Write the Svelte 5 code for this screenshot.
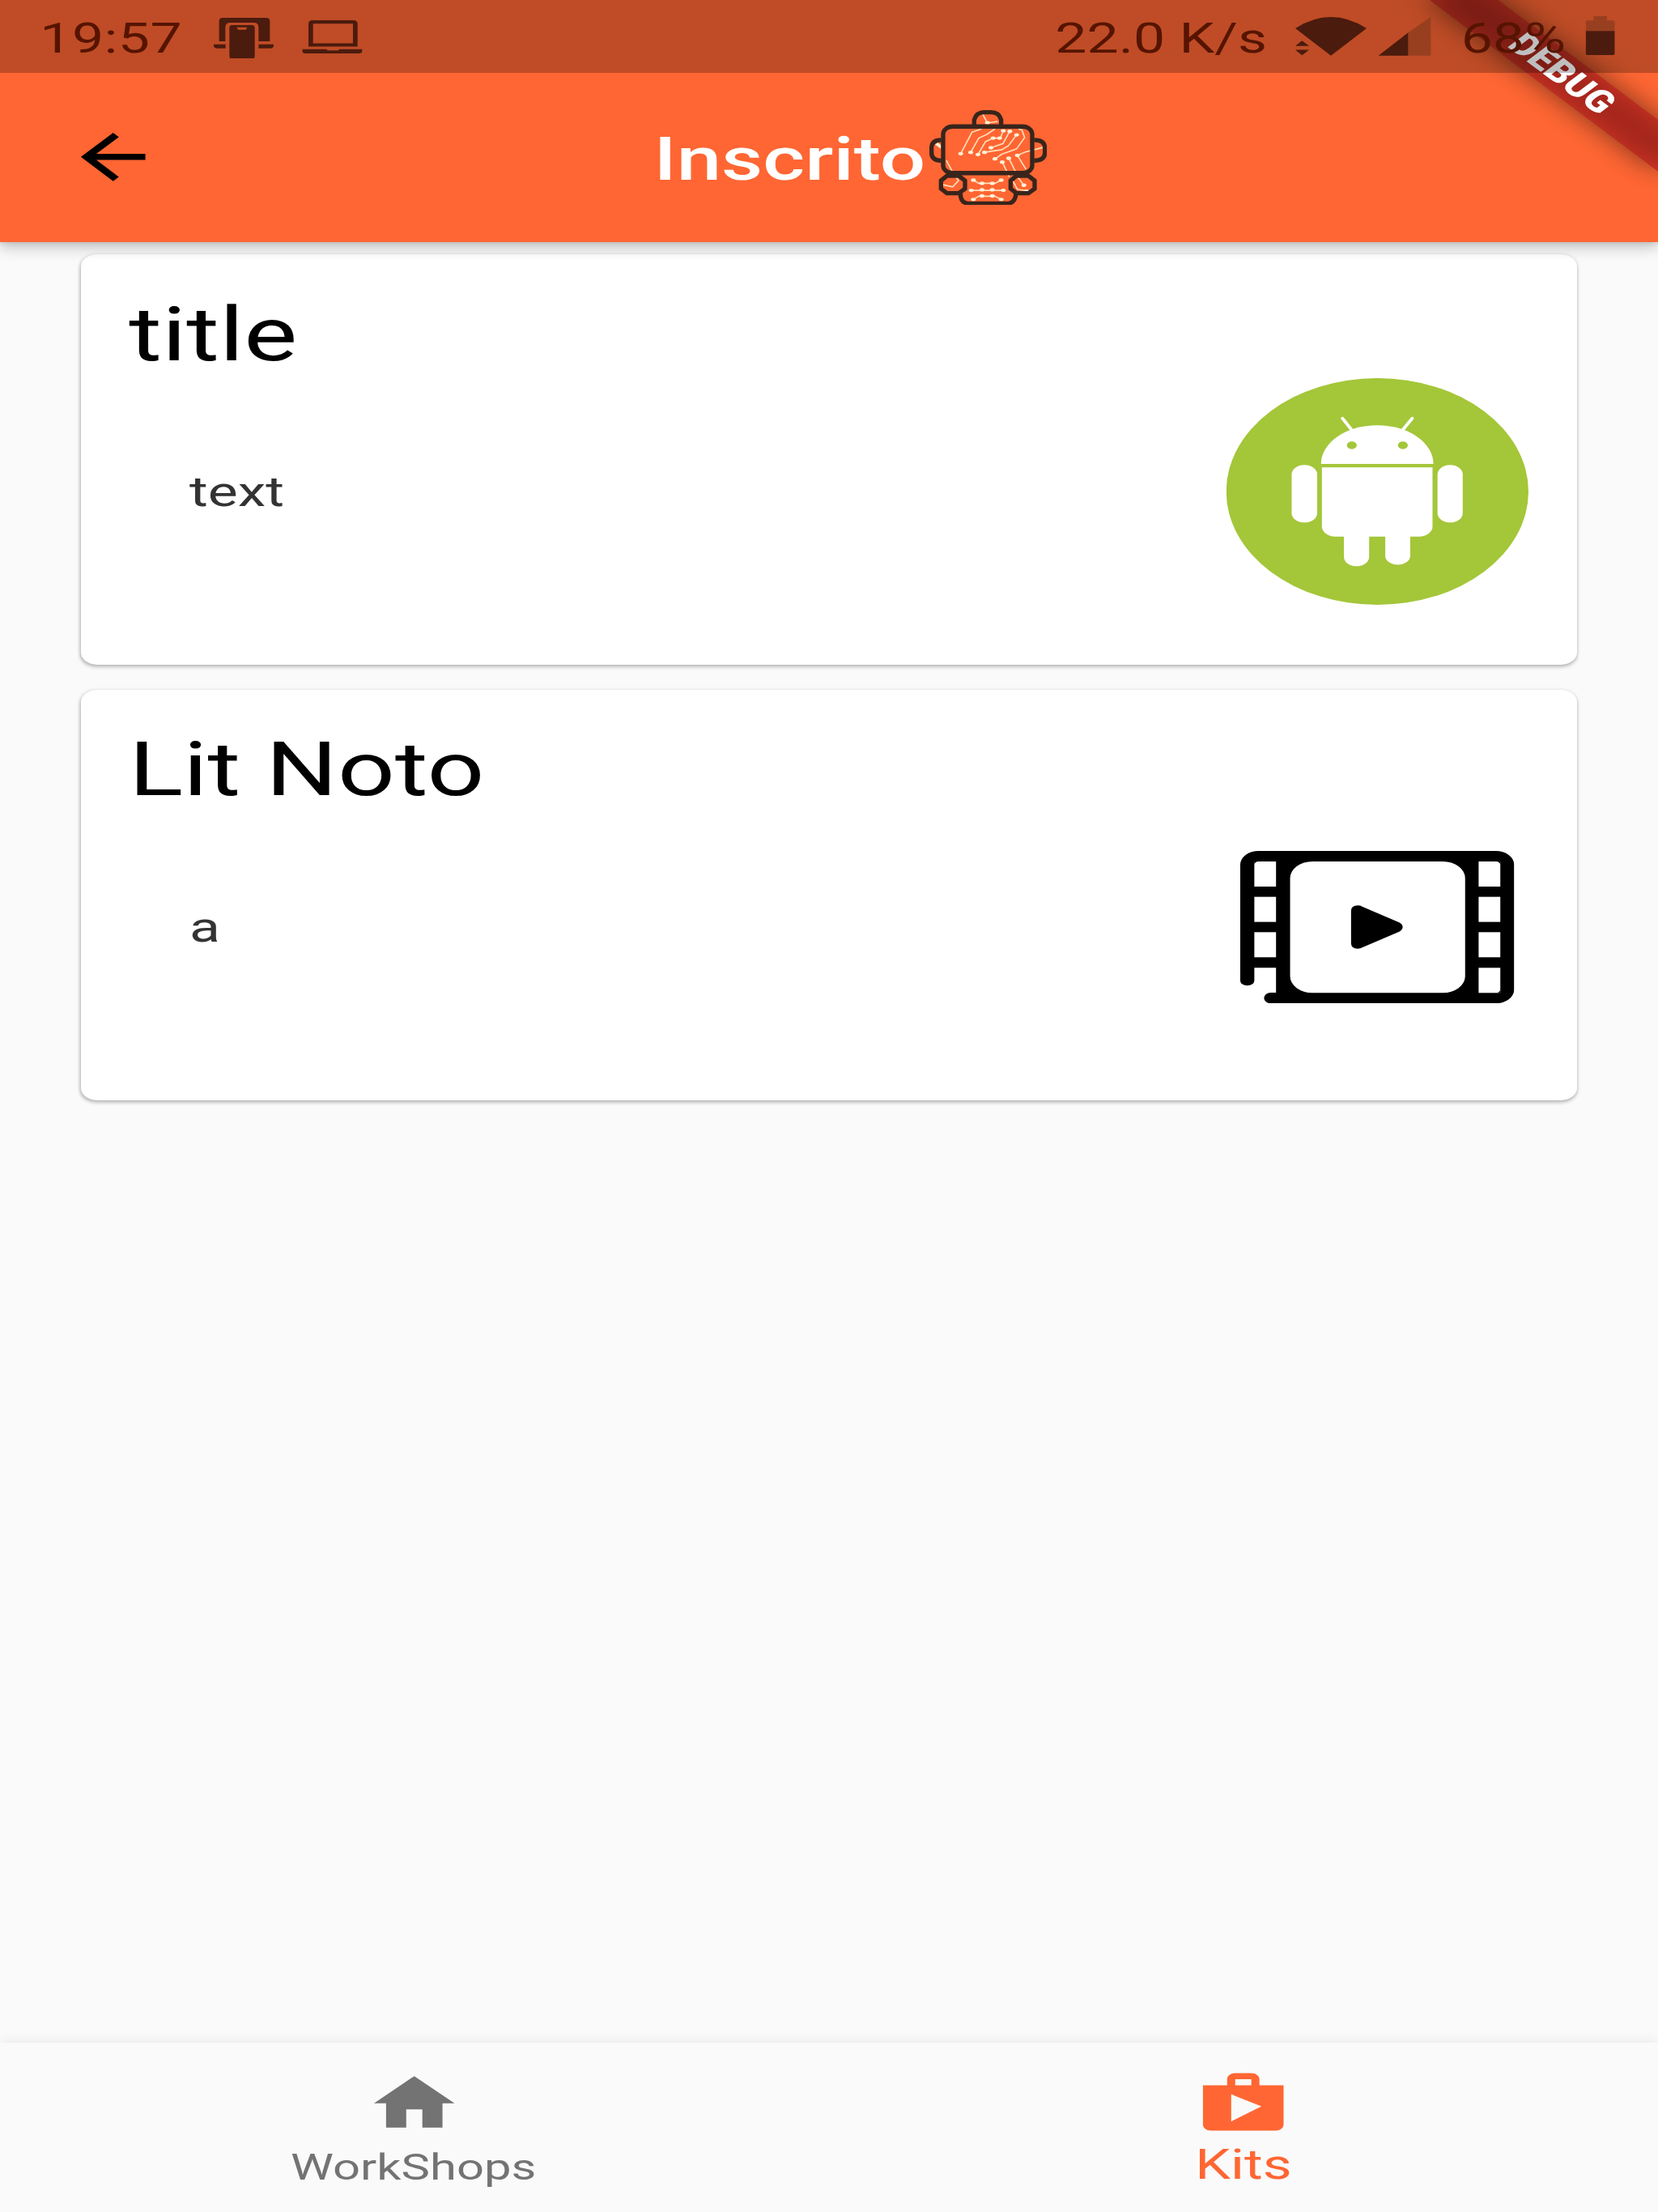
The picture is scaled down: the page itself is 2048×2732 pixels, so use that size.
<script>
  const cards = [
    { title: 'title', text: 'text', icon: 'android' },
    { title: 'Lit Noto', text: 'a', icon: 'film' }
  ];

  const traces = [
    '198,210 240,130 275,118',
    '235,205 265,152 295,138 325,118',
    '262,213 290,165 318,152 345,152 356,124',
    '310,188 355,172 380,126',
    '286,205 350,195 375,180 405,140',
    '325,230 350,212 405,192 435,150 425,122 412,118',
    '352,240 378,296',
    '376,226 404,282',
    '440,268 408,216 440,203 505,186',
    '145,235 172,285 190,310 168,333 132,325',
    '388,305 408,342 450,349',
    '410,298 432,327',
    '278,60 297,96 335,90',
    '245,308 265,320 325,320 348,308',
    '237,346 358,346',
    '245,380 265,368 325,368 348,380'
  ];

  const dots = [
    [198, 210], [235, 205], [262, 213], [310, 188], [286, 205], [325, 229],
    [352, 241], [376, 227], [408, 216], [356, 125], [380, 127], [405, 140],
    [318, 152], [342, 152], [297, 95], [432, 327], [442, 349], [245, 308],
    [348, 308], [277, 320], [315, 320], [237, 346], [277, 344], [315, 344],
    [356, 346], [245, 380], [348, 380], [277, 367], [315, 367]
  ];

  const filmHoles = [131, 262, 393, 525];
</script>

<div class="viewport">
  <div class="screen">
    <header class="header">
      <svg class="back" viewBox="0 0 24 24"><path d="M20 11H7.83l5.59-5.59L12 4l-8 8 8 8 1.41-1.41L7.83 13H20v-2z" /></svg>
      <div class="brand">
        <h1>Inscrito</h1>
        <svg class="robot" viewBox="82 48 436 352" preserveAspectRatio="none">
          <g class="trace">
            {#each traces as points}
              <polyline {points} />
            {/each}
          </g>
          <g class="dot">
            {#each dots as [cx, cy]}
              <ellipse {cx} {cy} rx="9" ry="6.5" />
            {/each}
            <path d="M103 176l10-8 12 10v14z" />
          </g>
          <g class="outline">
            <rect x="133" y="109" width="330" height="173" rx="36" ry="28" />
            <path d="M248 104V84q8-28 37-28h26q29 0 37 28v20" />
            <path d="M126 159q-36 0-36 30v18q0 28 36 29" />
            <path d="M470 159q40 0 40 30v18q0 28-40 29" />
            <path d="M147 292h44l23 18v30l-23 17h-44l-22-17v-30z" />
            <path d="M405 292h44l23 18v30l-23 17h-44l-22-17v-30z" />
            <path d="M197 357q0 34 26 38h152q26-4 28-38" />
          </g>
        </svg>
      </div>
    </header>

    <div class="ribbon"><span>DEBUG</span></div>

    <div class="status">
      <span class="clock">19:57</span>
      <svg class="cast" viewBox="791 65 222 152" preserveAspectRatio="none">
        <path d="M825 65H984Q999 65 999 77V152H957V100Q957 83 940 83H852Q834 83 834 100V152H811V77Q811 65 825 65Z" />
        <path d="M791 163H835V178H803Q791 178 791 168ZM957 163H1013V168Q1013 178 1000 178H957Z" />
        <path fill-rule="evenodd" d="M860 92H932Q943 92 943 101V207Q943 217 932 217H860Q849 217 849 207V101Q849 92 860 92ZM876 100L881 109H910L915 100Z" />
      </svg>
      <svg class="laptop" viewBox="1121 75 222 124" preserveAspectRatio="none">
        <path fill-rule="evenodd" d="M1160 75H1310Q1326 75 1326 89V173H1144V89Q1144 75 1160 75ZM1161 88V161H1309V88Z" />
        <path d="M1121 183H1210L1215 188H1254L1259 183H1343V190Q1343 199 1330 199H1134Q1121 199 1121 190Z" />
      </svg>
      <span class="speed">22.0 K/s</span>
      <svg class="wifi" viewBox="655 62 180 145" preserveAspectRatio="none">
        <path d="M655 104Q745 20 835 104L745 206Z" />
        <path d="M655 170L672 150 690 170ZM655 184H690L672 205Z" />
      </svg>
      <svg class="signal" viewBox="865 62 132 145" preserveAspectRatio="none">
        <path class="faded" d="M940 120L997 62V206H940Z" />
        <path d="M865 206L940 120V206Z" />
      </svg>
      <span class="percent">68%</span>
      <svg class="battery" viewBox="1386 60 74 144" preserveAspectRatio="none">
        <path class="faded" d="M1406 60H1440V76H1454Q1460 76 1460 82V115H1386V82Q1386 76 1392 76H1406Z" />
        <path d="M1386 115H1460V198Q1460 204 1453 204H1393Q1386 204 1386 198Z" />
      </svg>
    </div>

    <main>
      {#each cards as card}
        <article class="card">
          <h2>{card.title}</h2>
          <p>{card.text}</p>
          {#if card.icon === 'android'}
            <svg class="android" viewBox="98 80 1030 840" preserveAspectRatio="none">
              <ellipse class="green" cx="613" cy="500" rx="515" ry="420" />
              <g class="white">
                <path d="M421 398A191 143 0 0 1 804 398Z" />
                <path d="M424 411H801V629A45 38 0 0 1 756 667H469A45 38 0 0 1 424 629Z" />
                <rect x="321" y="402" width="87" height="213" rx="43" ry="35" />
                <rect x="818" y="402" width="86" height="213" rx="43" ry="35" />
                <path d="M499 640H585V742A43 35 0 0 1 499 742Z" />
                <path d="M640 640H725V742A43 35 0 0 1 640 742Z" />
              </g>
              <path class="antenna" d="M494 229L527 274M732 229L698 274" />
              <g class="green">
                <ellipse cx="526" cy="329" rx="17" ry="14" />
                <ellipse cx="700" cy="329" rx="17" ry="14" />
              </g>
            </svg>
          {:else}
            <svg class="film" viewBox="146 92 934 565" preserveAspectRatio="none">
              <path d="M208 92H1018A62 51 0 0 1 1080 143V606A62 51 0 0 1 1018 657H250A23 20 0 0 1 250 617H268V525H194V573A24 18 0 0 1 146 573V143A62 51 0 0 1 208 92Z" />
              <g class="white">
                <rect x="316" y="131" width="597" height="487" rx="76" ry="62" />
                {#each filmHoles as y, i}
                  {#if i < 3}
                    <rect x="194" {y} width="74" height="93" />
                  {/if}
                  <rect x="959" {y} width="74" height="93" />
                {/each}
              </g>
              <path d="M194 131H208Q196 132 194 143ZM1033 131H1019Q1031 132 1033 143ZM1033 618H1019Q1031 617 1033 606Z" />
              <path d="M524 314Q524 294 547 294Q556 294 562 298L688 357Q700 364 700 374Q700 384 688 391L562 450Q556 454 547 454Q524 454 524 434Z" />
            </svg>
          {/if}
        </article>
      {/each}
    </main>

    <nav>
      <div class="tab">
        <svg viewBox="0 0 24 24"><path d="M10 20v-6h4v6h5v-8h3L12 3 2 12h3v8z" /></svg>
        <span>WorkShops</span>
      </div>
      <div class="tab active">
        <svg viewBox="0 0 24 24"><path d="M16 6V4c0-1.11-.89-2-2-2h-4c-1.11 0-2 .89-2 2v2H2v13c0 1.11.89 2 2 2h16c1.11 0 2-.89 2-2V6h-6zm-6-2h4v2h-4V4zM9 18V9l7.5 4L9 18z" /></svg>
        <span>Kits</span>
      </div>
    </nav>
  </div>
</div>

<style>
  :global(body) {
    margin: 0;
    background: #fafafa;
  }

  .viewport {
    width: 2048px;
    height: 2732px;
    overflow: hidden;
  }

  /* The 1536px wide layout is stretched sideways to fill the window. */
  .screen {
    position: relative;
    display: flex;
    flex-direction: column;
    width: 1536px;
    height: 2732px;
    overflow: hidden;
    background: #fafafa;
    font-family: Roboto, sans-serif;
    transform: scaleX(1.33333);
    transform-origin: 0 0;
  }

  svg {
    display: block;
    flex: none;
  }

  .header {
    position: relative;
    z-index: 1;
    flex: none;
    box-sizing: border-box;
    display: flex;
    align-items: center;
    height: 298.6px;
    padding: 89.6px 0 0 60px;
    background: #ff6633;
    box-shadow: 0 6px 15px rgba(0, 0, 0, 0.24), 0 2px 4px rgba(0, 0, 0, 0.08);
  }

  .back {
    width: 89.6px;
    height: 89.6px;
  }

  .brand {
    display: flex;
    align-items: center;
    margin-left: 456px;
  }

  h1 {
    width: 255px;
    margin: 6px 0 0;
    color: #fff;
    font-size: 74.67px;
    line-height: 88px;
    font-weight: 500;
    white-space: nowrap;
  }

  .robot {
    width: 109px;
    height: 117px;
  }

  .outline {
    fill: none;
    stroke: #38251c;
    stroke-width: 16;
  }

  .trace {
    fill: none;
    stroke: #ffdfb8;
    stroke-width: 5;
  }

  .dot {
    fill: #fff0d8;
  }

  .ribbon {
    position: absolute;
    z-index: 2;
    top: 104.5px;
    right: -149.3px;
    width: 298.6px;
    height: 44.8px;
    transform: rotate(45deg);
    transform-origin: 50% -104.5px;
    text-align: center;
  }

  .ribbon::before,
  .ribbon::after {
    content: '';
    position: absolute;
    inset: 0;
  }

  .ribbon::before {
    background: rgba(0, 0, 0, 0.5);
    filter: blur(15px);
  }

  .ribbon::after {
    background: rgba(183, 28, 28, 0.627);
  }

  .ribbon span {
    position: relative;
    z-index: 1;
    display: block;
    padding-left: 2px;
    color: #fff;
    font-size: 38px;
    line-height: 44px;
    font-weight: 900;
  }

  .status {
    position: absolute;
    z-index: 3;
    top: 0;
    left: 0;
    box-sizing: border-box;
    display: flex;
    align-items: flex-start;
    width: 1536px;
    height: 89.6px;
    padding-left: 37px;
    background: rgba(0, 0, 0, 0.25);
    color: #561400;
    fill: #4b1b0e;
    font-size: 52.3px;
    line-height: 60px;
    white-space: nowrap;
  }

  .status span {
    margin-top: 17px;
  }

  .clock {
    width: 161px;
    letter-spacing: 0.3px;
  }

  .cast {
    width: 55.5px;
    height: 50.7px;
    margin-top: 21.7px;
  }

  .laptop {
    width: 55.5px;
    height: 41px;
    margin: 25px 0 0 26.5px;
  }

  .speed {
    width: 222.5px;
    margin-left: 642px;
  }

  .wifi {
    width: 66px;
    height: 48px;
    margin-top: 21px;
  }

  .signal {
    width: 48.5px;
    height: 48px;
    margin: 21px 0 0 11px;
  }

  .percent {
    width: 115px;
    margin-left: 28px;
  }

  .battery {
    width: 27px;
    height: 48px;
    margin-top: 20px;
  }

  .faded {
    fill: #983f20;
  }

  main {
    flex: 1;
    display: flex;
    flex-direction: column;
    gap: 30.4px;
    padding: 15.4px 74.7px;
  }

  .card {
    box-sizing: border-box;
    display: grid;
    grid-template-columns: 1fr 280px;
    grid-template-rows: 117px 280px;
    height: 507.5px;
    padding: 36px 45.2px 36px 44.8px;
    border-radius: 15px;
    background: #fff;
    box-shadow: 0 3px 4px rgba(0, 0, 0, 0.22), 0 0 4px rgba(0, 0, 0, 0.12);
  }

  h2 {
    grid-column: 1 / -1;
    margin: 9.6px 0 0;
    color: #000;
    font-size: 93.33px;
    line-height: 106px;
    font-weight: 400;
  }

  p {
    align-self: center;
    margin: 0 0 0 56px;
    color: #333;
    font-size: 52.3px;
    line-height: 62px;
  }

  .android {
    width: 280px;
    height: 280px;
  }

  .film {
    place-self: center;
    width: 253.7px;
    height: 188.3px;
  }

  .green {
    fill: #a4c639;
  }

  .white {
    fill: #fff;
  }

  .antenna {
    stroke: #fff;
    stroke-width: 11;
    stroke-linecap: round;
  }

  nav {
    position: relative;
    flex: none;
    display: flex;
    height: 209px;
    background: #fafafa;
    box-shadow: 0 -2px 12px rgba(0, 0, 0, 0.07);
  }

  .tab {
    flex: 1;
    display: flex;
    flex-direction: column;
    align-items: center;
    padding-top: 30px;
    color: #737373;
    fill: #737373;
    font-size: 44.8px;
    line-height: 52px;
  }

  .tab svg {
    width: 89.6px;
    height: 89.6px;
  }

  .tab span {
    margin: 8.5px 2px 0 0;
  }

  .active {
    color: #ff6633;
    fill: #ff6633;
    font-size: 52.3px;
  }

  .active span {
    margin: 4px 0 0;
  }
</style>
